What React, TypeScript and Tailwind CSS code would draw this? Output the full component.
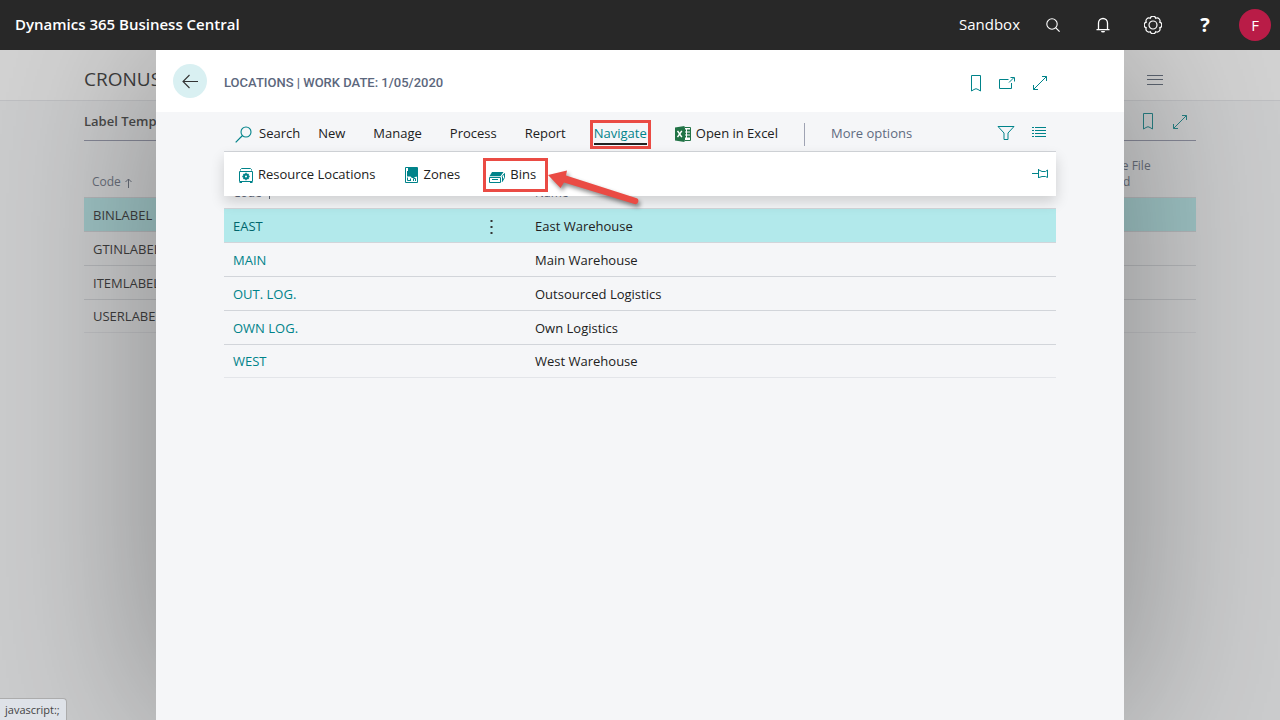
import type { ReactNode } from "react";

type IconProps = { className?: string };

function Svg({ w, h, className = "", children }: { w: number; h: number; className?: string; children: ReactNode }) {
  return (
    <svg width={w} height={h} viewBox={`0 0 ${w} ${h}`} fill="none" stroke="currentColor" className={`shrink-0 ${className}`} aria-hidden="true">
      {children}
    </svg>
  );
}

const BookmarkIcon = ({ className }: IconProps) => (
  <Svg w={12} h={17} className={className}>
    <path d="M1.500.500v15.500l2.500-1.500 2-.8 2 .8 2.500 1.500V.500z" />
  </Svg>
);

const ExpandIcon = ({ className }: IconProps) => (
  <Svg w={16} h={16} className={className}>
    <path d="M1.500 14.500l13-13M10 1.500h4.500V6M1.500 10v4.500H6" />
  </Svg>
);

const PopOutIcon = () => (
  <Svg w={16} h={13}>
    <path d="M9.500 2.500H.500v9h12V6M10 5.500l4.500-4.500M11.500.500h4v4" />
  </Svg>
);

const FilterIcon = () => (
  <Svg w={18} h={16}>
    <path d="M1 1.500h16L11 8v6.500H7V8z" />
  </Svg>
);

const ListIcon = () => (
  <Svg w={14} h={11}>
    <path d="M0 .5h2M3 .5h11M0 3.500h2M3 3.500h11M0 6.500h2M3 6.500h11M0 9.500h2M3 9.500h11" />
  </Svg>
);

const PinIcon = () => (
  <Svg w={17} h={10}>
    <path d="M0 4.500h6M6.500 0v9M7 1l3 1.500h3.500L15.500 1v7.500l-2-1H10L7 8.500" />
  </Svg>
);

const MagnifierLeftIcon = () => (
  <Svg w={17} h={17}>
    <circle cx="11" cy="6" r="5" strokeWidth="1.100" />
    <path d="M7.500 9.500L.7 16.300" strokeWidth="1.200" />
  </Svg>
);

const BackIcon = () => (
  <Svg w={16} h={15}>
    <path d="M16 7.500H1M7.500 1L1 7.500 7.500 14" strokeWidth="1.100" />
  </Svg>
);

const SortAscIcon = () => (
  <Svg w={7} h={10} className="ml-1 inline-block">
    <path d="M3.500 10V1M.500 4l3-3 3 3" />
  </Svg>
);

const ResourceIcon = () => (
  <Svg w={14} h={15}>
    <path d="M1.500 2.500v-1l1-1h9l1 1v1M.500 3.500h13v10H.500zM.500 14.500H3M11 14.500h2.500" />
    <circle cx="7" cy="8.500" r="2" strokeWidth="2" />
    <path d="M7 4.800V6M7 11v1.200M3.300 8.500h1.200M9.500 8.500h1.200M4.500 6l1 1M9.500 6l-1 1M4.500 11l1-1M9.500 11l-1-1" strokeWidth="1.400" />
  </Svg>
);

const ZonesIcon = () => (
  <Svg w={13} h={16}>
    <path d="M.5.500h12v15H.500z" />
    <path d="M3 1h9.500v8.500L10 10l-1 1H7l-1.500-1.500H2V4h1z" fill="currentColor" stroke="none" />
    <path d="M2.500 10.500v3h3.500M5.500 13.500v-2M8.500 14v-2.500h2V14" />
  </Svg>
);

const BinsIcon = () => (
  <Svg w={17} h={11}>
    <path d="M3 0h11.500L11.500 4.200H.5z" fill="currentColor" stroke="none" />
    <path d="M.5 5.500h11v5H.500zM3 7.500h6M13 4.500l2.500-3M13.200 9.500l2.300-4V1.500M13.500 4.500v5" />
  </Svg>
);

const ExcelIcon = () => (
  <Svg w={16} h={16}>
    <path d="M0 1.600L9.500 0v16L0 14.400z" fill="#217346" stroke="none" />
    <path d="M9.500 1.500h6v13h-6z" fill="#fff" stroke="#217346" />
    <path d="M10 4.500h1M12 4.500h3M10 7.500h1M12 7.500h3M10 10.500h1M12 10.500h3" stroke="#217346" strokeWidth="2" />
    <path d="M2.500 4.800l4.300 6.400M6.800 4.800l-4.300 6.400" stroke="#fff" strokeWidth="1.500" />
  </Svg>
);

const GearIcon = () => (
  <Svg w={18} h={18}>
    <circle cx="9" cy="9" r="4" strokeWidth="1.200" />
    <path
      d="M11.800 2.300A2.900 2.900 0 0115.700 6.200A2.900 2.900 0 0115.700 11.800A2.900 2.900 0 0111.800 15.700A2.900 2.900 0 016.200 15.700A2.900 2.900 0 012.300 11.800A2.900 2.900 0 012.300 6.200A2.900 2.900 0 016.200 2.300A2.900 2.900 0 0111.800 2.300z"
      strokeWidth="1.200"
    />
  </Svg>
);

const BellIcon = () => (
  <Svg w={14} h={16}>
    <path d="M2.500 12.500V6a4.500 4.500 0 019 0v6.500M.5 12.700h13" strokeWidth="1.300" />
    <path d="M5 14a2 1.500 0 004 0z" fill="currentColor" stroke="none" />
  </Svg>
);

const SearchIcon = () => (
  <Svg w={14} h={14}>
    <circle cx="6" cy="6" r="5.200" strokeWidth="1.100" />
    <path d="M9.800 9.800l3.800 3.800" strokeWidth="1.200" />
  </Svg>
);

function TopBar() {
  return (
    <header className="relative z-20 flex h-[50px] shrink-0 items-center justify-between bg-[#282828] pr-[9px] pl-[15px] text-white">
      <h1 className="pb-[2px] text-[15px] font-semibold">Dynamics 365 Business Central</h1>
      <div className="flex items-center">
        <span className="mr-5 pb-[2px] text-[15px]">Sandbox</span>
        <button aria-label="Search" className="flex w-[26px] items-center justify-center"><SearchIcon /></button>
        <button aria-label="Notifications" className="ml-6 flex w-[26px] items-center justify-center"><BellIcon /></button>
        <button aria-label="Settings" className="ml-6 flex w-[26px] items-center justify-center"><GearIcon /></button>
        <button aria-label="Help" className="ml-[26px] w-[26px] text-center text-xl leading-6 font-bold">?</button>
        <button aria-label="Account" className="ml-[21px] size-8 rounded-full bg-[#b91c47] text-[15px]">F</button>
      </div>
    </header>
  );
}

const labels = ["BINLABEL", "GTINLABEL", "ITEMLABEL", "USERLABEL"];

const rowClass = "h-[34px] border-y border-[#d2d5da] last:h-[33px] last:border-b-[#e3e5e9]";

function LabelPage() {
  return (
    <div className="absolute inset-0 bg-[#f5f6f8]">
      <div className="flex h-[51px] items-center justify-between border-b border-[#e1e3e8] bg-white pt-[9px] pr-[117px] pl-[84px]">
        <h2 className="text-[19px] text-[#212121]">CRONUS</h2>
        <button aria-label="Menu" className="text-[#505c6d]">
          <Svg w={16} h={10}><path d="M0 .5h16M0 4.500h16M0 9.500h16" /></Svg>
        </button>
      </div>
      <div className="px-[84px]">
        <div className="flex h-10 items-center justify-between border-b border-[#8d90a6] pt-[2px] pr-2">
          <h3 className="text-[13px] font-semibold text-[#333]">Label Templates</h3>
          <div className="flex gap-[18px] text-[#00838a]">
            <button aria-label="Bookmark label templates"><BookmarkIcon /></button>
            <button aria-label="Expand label templates"><ExpandIcon /></button>
          </div>
        </div>
        <table className="w-full table-fixed border-collapse text-left text-[13px]">
          <thead>
            <tr className="h-14 text-xs text-[#60697a]">
              <th className="pt-[26px] pl-2 font-normal">Code<SortAscIcon /></th>
              <th className="w-[120px] pt-[10px] leading-4 font-normal">Template File<br />Uploaded</th>
            </tr>
          </thead>
          <tbody>
            {labels.map((l, i) => (
              <tr key={l} className={`${rowClass} ${i === 0 ? "bg-[#b2e9eb]" : ""}`}>
                <td className="pt-[3px] pl-[9px] text-[#212121]">{l}</td>
                <td />
              </tr>
            ))}
          </tbody>
        </table>
      </div>
    </div>
  );
}

const locations = [
  ["EAST", "East Warehouse"],
  ["MAIN", "Main Warehouse"],
  ["OUT. LOG.", "Outsourced Logistics"],
  ["OWN LOG.", "Own Logistics"],
  ["WEST", "West Warehouse"],
];

function ActionBar() {
  return (
    <div className="relative z-10 flex h-10 items-center justify-between border-b border-[#d2d5da] pt-[2px] pr-[10px] pl-[11px] text-[13px] text-[#212121]">
      <div className="flex items-center gap-7 pt-[3px]">
        <div className="flex items-center gap-[18px]">
          <button className="flex items-center gap-[7px]"><span className="text-[#00838a]"><MagnifierLeftIcon /></span>Search</button>
          <button>New</button>
        </div>
        <button>Manage</button>
        <button>Process</button>
        <button>Report</button>
        <button className="relative text-[#00838a]">
          <span className="block border-b-2 border-[#212121] leading-5">Navigate</span>
          <span className="absolute -inset-x-1 -top-[3px] -bottom-1 border-3 border-[#ea4b44]" />
        </button>
        <div className="flex items-center gap-[26px]">
          <button className="flex items-center gap-[5px]"><ExcelIcon />Open in Excel</button>
          <span className="h-[23px] w-px bg-[#9fa3b3]" />
          <button className="text-[#5f6b80]">More options</button>
        </div>
      </div>
      <div className="flex items-center gap-[17px] text-[#00838a]">
        <button aria-label="Filter"><FilterIcon /></button>
        <button aria-label="Show as list"><ListIcon /></button>
      </div>
    </div>
  );
}

function NavigateMenu() {
  return (
    <div className="absolute inset-x-0 top-full z-10 flex h-11 items-center justify-between bg-white pr-[7px] pl-[15px] text-[13px] text-[#212121] shadow-[0_6px_14px_rgba(0,0,0,0.16)]">
      <div className="flex items-center gap-[29px] pt-[2px]">
        <button className="flex items-center gap-[5px]"><span className="text-[#00838a]"><ResourceIcon /></span>Resource Locations</button>
        <button className="flex items-center gap-[6px]"><span className="text-[#00838a]"><ZonesIcon /></span>Zones</button>
        <button className="relative flex items-center gap-1">
          <span className="pt-1 text-[#00838a]"><BinsIcon /></span>Bins
          <span className="absolute -top-[7px] -right-3 -bottom-[7px] -left-[6px] border-3 border-[#ea4b44]" />
          <svg width="96" height="44" viewBox="0 0 96 44" className="absolute top-0 left-[55px] drop-shadow-[2px_3px_2px_rgba(0,0,0,0.45)]" aria-hidden="true">
            <path d="M4 10L23 5.500 22 10.500 92 33A3 3 0 0190.500 39L20 17.500 16.500 23z" fill="#ea4b44" />
          </svg>
        </button>
      </div>
      <button aria-label="Pin menu" className="text-[#00838a]"><PinIcon /></button>
    </div>
  );
}

function LocationsDialog() {
  return (
    <section role="dialog" aria-label="Locations" className="flex-1 bg-[#f5f6f8] shadow-[0_0_170px_rgba(0,0,0,0.34)]">
      <div className="flex h-[62px] items-center justify-between bg-white pr-[76px] pl-[17px]">
        <div className="flex items-center gap-[17px]">
          <button aria-label="Back" className="flex size-[34px] items-center justify-center rounded-full bg-[#d9f0f2] text-[#333]"><BackIcon /></button>
          <h2 className="pt-[3px] font-['Roboto',sans-serif] text-[13px] font-medium text-[#5c677d]">LOCATIONS | WORK DATE: 1/05/2020</h2>
        </div>
        <div className="flex items-center gap-[17px] pt-[4px] text-[#00838a]">
          <button aria-label="Bookmark"><BookmarkIcon /></button>
          <button aria-label="Open in new window"><PopOutIcon /></button>
          <button aria-label="Expand"><ExpandIcon /></button>
        </div>
      </div>
      <div className="px-[68px]">
        <div className="relative z-10">
          <ActionBar />
          <NavigateMenu />
        </div>
        <table className="w-full table-fixed border-collapse text-left text-[13px]">
          <thead>
            <tr className="h-14 text-xs text-[#60697a]">
              <th className="w-[230px] pt-[26px] pl-[9px] font-normal">Code<SortAscIcon /></th>
              <th className="w-[74px]" />
              <th className="pt-[26px] pl-[7px] font-normal">Name</th>
            </tr>
          </thead>
          <tbody>
            {locations.map(([code, name], i) => (
              <tr key={code} className={`${rowClass} ${i === 0 ? "bg-[#b2e9eb]" : ""}`}>
                <td className="pt-[3px] pl-[9px]"><a href="#" className={i === 0 ? "text-[#00666d]" : "text-[#00838a]"}>{code}</a></td>
                <td className="pt-[3px] pl-[36px]">
                  {i === 0 && (
                    <button aria-label="Row options" className="block">
                      <svg width="3" height="14" viewBox="0 0 3 14" fill="#333" aria-hidden="true"><path d="M.5 0h2v2h-2zM.5 6h2v2h-2zM.5 12h2v2h-2z" /></svg>
                    </button>
                  )}
                </td>
                <td className="pt-[3px] pl-[7px] text-[#212121]">{name}</td>
              </tr>
            ))}
          </tbody>
        </table>
      </div>
    </section>
  );
}

export default function App() {
  return (
    <div className="flex min-h-screen flex-col font-['Open_Sans','Noto_Sans',sans-serif]">
      <TopBar />
      <main className="relative flex min-h-[400px] flex-1 overflow-hidden">
        <LabelPage />
        <div className="relative flex flex-1 bg-[rgba(122,122,122,0.33)] px-[156px]">
          <LocationsDialog />
        </div>
        <div className="absolute bottom-0 left-0 rounded-tr border-t border-r border-[#acacac] bg-[#dee2e8] pt-[2px] pr-[6px] pb-px pl-[5px] text-[11px] leading-[18px] text-[#444]">javascript:;</div>
      </main>
    </div>
  );
}
